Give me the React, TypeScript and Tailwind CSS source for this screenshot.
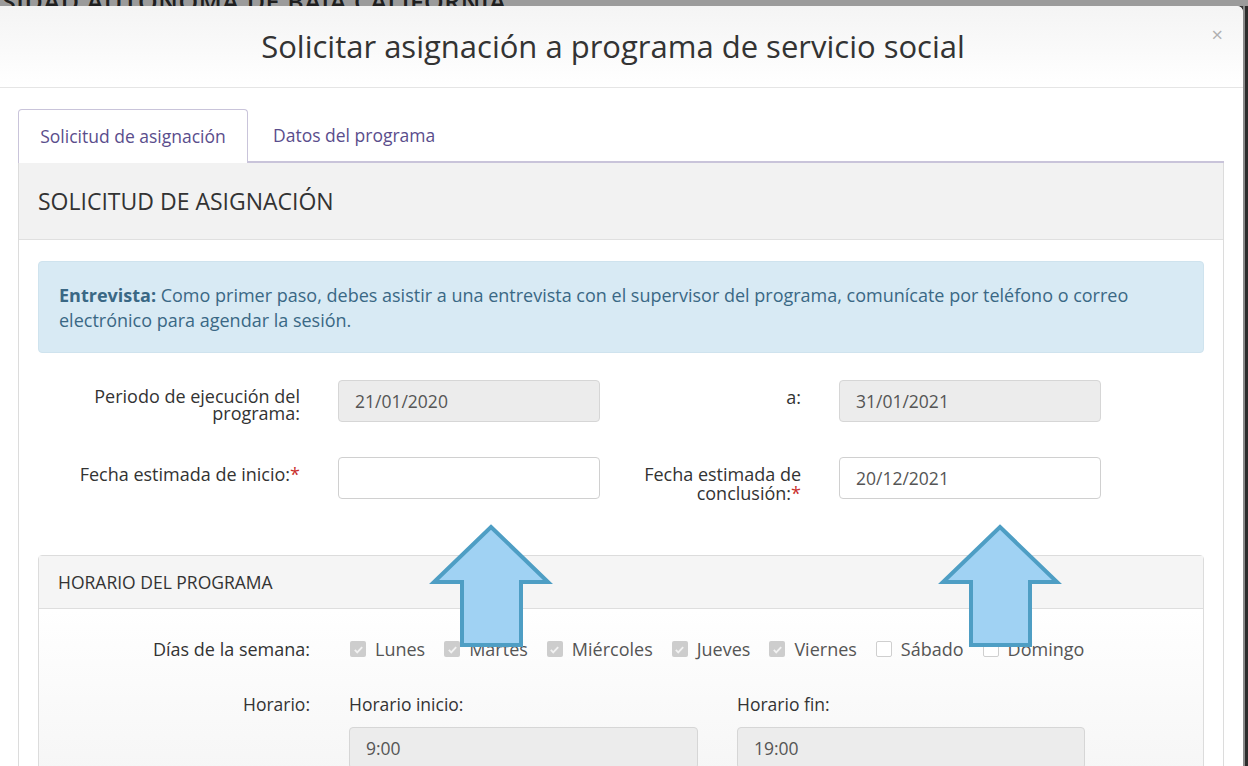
const font = { fontFamily: '"Open Sans", "Liberation Sans", sans-serif' };

const days = [
  { name: "Lunes", on: true },
  { name: "Martes", on: true },
  { name: "Miércoles", on: true },
  { name: "Jueves", on: true },
  { name: "Viernes", on: true },
  { name: "Sábado", on: false },
  { name: "Domingo", on: false },
];

function Check({ on }: { on: boolean }) {
  if (!on) return <span className="inline-block h-[16px] w-[16px] rounded-[2px] border border-[#cfcfcf] bg-white" />;
  return (
    <span className="flex h-[16px] w-[16px] items-center justify-center rounded-[2px] bg-[#cdcdcd]">
      <svg width="11" height="11" viewBox="0 0 12 12">
        <path d="M2 6.5l2.6 2.6L10 3.4" fill="none" stroke="#f2f2f2" strokeWidth="2" />
      </svg>
    </span>
  );
}

function Field({ value, disabled }: { value?: string; disabled?: boolean }) {
  return (
    <div
      className={`flex h-[42px] items-center rounded-[4px] border px-[16px] text-[17.5px] text-[#555] ${
        disabled ? "border-[#d6d6d6] bg-[#ececec]" : "border-[#d0d0d0] bg-white"
      }`}
    >
      {value}
    </div>
  );
}

function Arrow({ x }: { x: number }) {
  // tip at x, y 527
  const pts = `${x},527 ${x + 57},582 ${x + 30},582 ${x + 30},645 ${x - 29},645 ${x - 29},582 ${x - 57},582`;
  return <polygon points={pts} fill="#a0d2f3" stroke="#4e9ec4" strokeWidth="4" strokeLinejoin="miter" />;
}

export default function App() {
  return (
    <div className="relative h-[766px] w-[1248px] overflow-hidden bg-[#3a3a3a]" style={font}>
      <div className="h-[6px] overflow-hidden bg-[#9b9b9b]">
        <div className="-mt-[17px] pl-[2px] text-[25px] font-semibold tracking-wide whitespace-nowrap text-[#1f1f1f]">
          SIDAD AUTÓNOMA DE BAJA CALIFORNIA
        </div>
      </div>
      <div className="flex h-[760px]">
        <div className="w-[1243px] overflow-hidden rounded-tr-[6px] bg-white">
          {/* modal header */}
          <div className="relative flex h-[82px] items-center justify-center border-b border-[#e5e5e5] bg-gradient-to-b from-[#f4f4f4] to-white pr-[17px]">
            <h1 className="text-[31px] text-[#333]">Solicitar asignación a programa de servicio social</h1>
            <span className="absolute top-[14px] right-[20px] text-[20px] text-[#b0b0b0]">×</span>
          </div>

          <div className="pt-[21px] pr-[19px] pl-[18px]">
            {/* tabs */}
            <div className="flex h-[54px] items-stretch border-b-2 border-[#c9c4da]">
              <div className="-mb-[2px] flex w-[230px] items-center justify-center rounded-t-[4px] border border-b-0 border-[#c9c4da] bg-white text-[17.5px] text-[#5a4d8c]">
                Solicitud de asignación
              </div>
              <div className="flex items-center px-[25px] text-[17.5px] text-[#5a4d8c]">Datos del programa</div>
            </div>

            {/* panel */}
            <div className="h-[620px] border-x border-[#dcdcdc]">
              <div className="flex h-[77px] items-center border-b border-[#e0e0e0] bg-[#f2f2f2] px-[19px] text-[23px] text-[#333]">
                SOLICITUD DE ASIGNACIÓN
              </div>
              <div className="px-[19px] pt-[21px]">
                <div className="h-[92px] rounded-[4px] border border-[#cfe3ee] bg-[#d8eaf4] px-[20px] pt-[21px] text-[18px] leading-[25px] text-[#3a6885]">
                  <b className="font-bold">Entrevista:</b> Como primer paso, debes asistir a una entrevista con el supervisor del programa,
                  comunícate por teléfono o correo electrónico para agendar la sesión.
                </div>

                <div className="mt-[27px] grid grid-cols-[262px_262px_163px_262px] gap-x-[38px] gap-y-[35px] text-[18px] text-[#333]">
                  <div className="h-[42px] pt-[8px] text-right leading-[17px] whitespace-nowrap">
                    Periodo de ejecución del
                    <br />
                    programa:
                  </div>
                  <Field value="21/01/2020" disabled />
                  <div className="h-[42px] pt-[8px] text-right leading-[18px]">a:</div>
                  <Field value="31/01/2021" disabled />

                  <div className="h-[42px] pt-[8px] text-right leading-[18px] whitespace-nowrap">
                    Fecha estimada de inicio:<span className="text-[#c9302c]">*</span>
                  </div>
                  <Field />
                  <div className="h-[42px] pt-[8px] text-right leading-[19px] whitespace-nowrap">
                    Fecha estimada de
                    <br />
                    conclusión:<span className="text-[#c9302c]">*</span>
                  </div>
                  <Field value="20/12/2021" />
                </div>

                {/* horario */}
                <div className="mt-[56px] h-[230px] rounded-t-[4px] border border-[#dcdcdc]">
                  <div className="flex h-[53px] items-center border-b border-[#dedede] bg-[#f5f5f5] px-[19px] text-[17.5px] text-[#333]">
                    HORARIO DEL PROGRAMA
                  </div>
                  <div className="bg-gradient-to-b from-white to-[#f4f4f4] pt-[28px] pb-[40px]">
                    <div className="flex h-[24px] items-center text-[18px]">
                      <div className="w-[271px] text-right text-[#333]">Días de la semana:</div>
                      <div className="ml-[40px] flex items-center gap-[19px] text-[#555]">
                        {days.map((d) => (
                          <div key={d.name} className="flex items-center gap-[9px]">
                            <Check on={d.on} />
                            <span>{d.name}</span>
                          </div>
                        ))}
                      </div>
                    </div>

                    <div className="mt-[31px] flex text-[17.5px] text-[#333]">
                      <div className="w-[271px] text-right leading-[24px]">Horario:</div>
                      <div className="ml-[39px] grid grid-cols-[349px_348px] gap-x-[39px]">
                        <div>
                          <div className="leading-[24px]">Horario inicio:</div>
                          <div className="mt-[11px]">
                            <Field value="9:00" disabled />
                          </div>
                        </div>
                        <div>
                          <div className="leading-[24px]">Horario fin:</div>
                          <div className="mt-[11px]">
                            <Field value="19:00" disabled />
                          </div>
                        </div>
                      </div>
                    </div>
                  </div>
                </div>
              </div>
            </div>
          </div>
        </div>
        <div className="w-[5px] border-l-2 border-[#8a8a8a] bg-[#2c2c2c]" />
      </div>

      {/* annotation arrows */}
      <svg className="pointer-events-none absolute top-0 left-0" width="1248" height="766">
        <Arrow x={491} />
        <Arrow x={1000} />
      </svg>
    </div>
  );
}
